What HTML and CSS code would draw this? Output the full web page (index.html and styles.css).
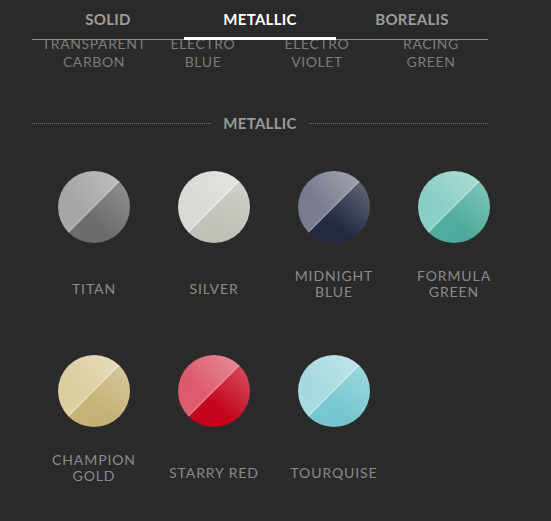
FILE: index.html
```html
<!DOCTYPE html>
<html>
<head>
<meta charset="utf-8">
<link rel="stylesheet" href="styles.css">
</head>
<body>
<div class="page">
  <nav class="tabs">
    <div class="tab">SOLID</div>
    <div class="tab active">METALLIC</div>
    <div class="tab">BOREALIS</div>
  </nav>
  <div class="prev-wrap">
    <div class="prev">
      <div class="prev-item first">TRANSPARENT<br>CARBON</div>
      <div class="prev-item">ELECTRO<br>BLUE</div>
      <div class="prev-item">ELECTRO<br>VIOLET</div>
      <div class="prev-item">RACING<br>GREEN</div>
    </div>
  </div>
  <h2 class="section-title"><span>METALLIC</span></h2>
  <div class="swatches">
    <div class="swatch">
      <div class="dot titan"></div>
      <div class="label"><span class="one">TITAN</span></div>
    </div>
    <div class="swatch">
      <div class="dot silver"></div>
      <div class="label"><span class="one">SILVER</span></div>
    </div>
    <div class="swatch">
      <div class="dot midnight"></div>
      <div class="label"><span>MIDNIGHT<br>BLUE</span></div>
    </div>
    <div class="swatch">
      <div class="dot formula"></div>
      <div class="label"><span>FORMULA<br>GREEN</span></div>
    </div>
    <div class="swatch">
      <div class="dot gold"></div>
      <div class="label"><span>CHAMPION<br>GOLD</span></div>
    </div>
    <div class="swatch">
      <div class="dot red"></div>
      <div class="label"><span class="one">STARRY RED</span></div>
    </div>
    <div class="swatch">
      <div class="dot turq"></div>
      <div class="label"><span class="one">TOURQUISE</span></div>
    </div>
  </div>
</div>
</body>
</html>
```
FILE: styles.css
```css
html, body {
  margin: 0;
  padding: 0;
  background: #2a2a2a;
}
body {
  font-family: Lato, "Open Sans", sans-serif;
  color: #8a8a8a;
  overflow: hidden;
}
.page {
  width: 456px;
  padding-left: 32px;
}
.tabs {
  display: flex;
  height: 39px;
  border-bottom: 1px solid #8c8c8c;
}
.tab {
  flex: 1;
  text-align: center;
  line-height: 39px;
  font-size: 15px;
  font-weight: 700;
  color: #9c9c9c;
  letter-spacing: 0.3px;
}
.tab.active {
  color: #ffffff;
  box-shadow: inset 0 -2px 0 #ffffff, 0 1px 0 #ffffff;
}
.prev-wrap {
  height: 30px;
  overflow: hidden;
}
.prev {
  margin-top: -5px;
  display: grid;
  grid-template-columns: repeat(4, 114px);
}
.prev-item {
  text-align: center;
  font-size: 14px;
  line-height: 18px;
  color: #7c7c7c;
  letter-spacing: 0.6px;
}
.prev-item.first {
  padding-left: 10px;
}
.section-title {
  margin: 43px 0 0;
  display: flex;
  align-items: center;
  gap: 12px;
  font-size: 15px;
  line-height: 20px;
  font-weight: 700;
  color: #9a9a9a;
  letter-spacing: 0.3px;
}
.section-title::before,
.section-title::after {
  content: "";
  flex: 1;
  border-top: 1px dotted #6a6a6a;
}
.swatches {
  margin: 38px 0 0 2px;
  display: grid;
  grid-template-columns: repeat(4, 120px);
  row-gap: 55px;
}
.swatch {
  display: flex;
  flex-direction: column;
  align-items: center;
}
.dot {
  width: 72px;
  height: 72px;
  border-radius: 50%;
}
.label {
  margin-top: 25px;
  height: 32px;
  display: flex;
  flex-direction: column;
  justify-content: flex-end;
  text-align: center;
  font-size: 14px;
  line-height: 16px;
  color: #8a8a8a;
  letter-spacing: 0.9px;
  white-space: nowrap;
}
.label .one {
  margin-bottom: 3px;
}
.titan {
  background:
    linear-gradient(45deg, rgba(255,255,255,0) 40%, rgba(255,255,255,0.3) 100%),
    linear-gradient(135deg, #a2a2a2 0%, #a8a8a8 48.4%, #bcbcbc 49.4%, #a8a8a8 50%, #6d6d6d 50.6%, #6a6a6a 100%);
}
.silver {
  background:
    linear-gradient(45deg, rgba(255,255,255,0) 40%, rgba(255,255,255,0.3) 100%),
    linear-gradient(135deg, #d8d8d4 0%, #dadad6 48.4%, #eaeae6 49.4%, #dadad6 50%, #c2c2ba 50.6%, #bebeb6 100%);
}
.midnight {
  background:
    linear-gradient(45deg, rgba(255,255,255,0) 40%, rgba(255,255,255,0.35) 100%),
    linear-gradient(135deg, #74788a 0%, #7a7e8f 48.4%, #9396a6 49.4%, #7e8292 50%, #262b42 50.6%, #222740 100%);
}
.formula {
  background:
    linear-gradient(45deg, rgba(255,255,255,0) 40%, rgba(255,255,255,0.35) 100%),
    linear-gradient(135deg, #86ccc2 0%, #8ccfc5 48.4%, #a8ded6 49.4%, #90d0c6 50%, #4fae9f 50.6%, #4aa99a 100%);
}
.gold {
  background:
    linear-gradient(45deg, rgba(255,255,255,0) 40%, rgba(255,255,255,0.35) 100%),
    linear-gradient(135deg, #d8cb9c 0%, #dccfa2 48.4%, #e8dfbc 49.4%, #ddd0a4 50%, #c6b376 50.6%, #c2ae70 100%);
}
.red {
  background:
    linear-gradient(45deg, rgba(255,255,255,0) 40%, rgba(255,255,255,0.35) 100%),
    linear-gradient(135deg, #db5668 0%, #dd5d6e 48.4%, #e88290 49.4%, #de6272 50%, #c6061e 50.6%, #c2001a 100%);
}
.turq {
  background:
    linear-gradient(45deg, rgba(255,255,255,0) 40%, rgba(255,255,255,0.35) 100%),
    linear-gradient(135deg, #a2d8de 0%, #a8dbe0 48.4%, #c4eaee 49.4%, #abdce1 50%, #78c8d2 50.6%, #72c4ce 100%);
}
```
